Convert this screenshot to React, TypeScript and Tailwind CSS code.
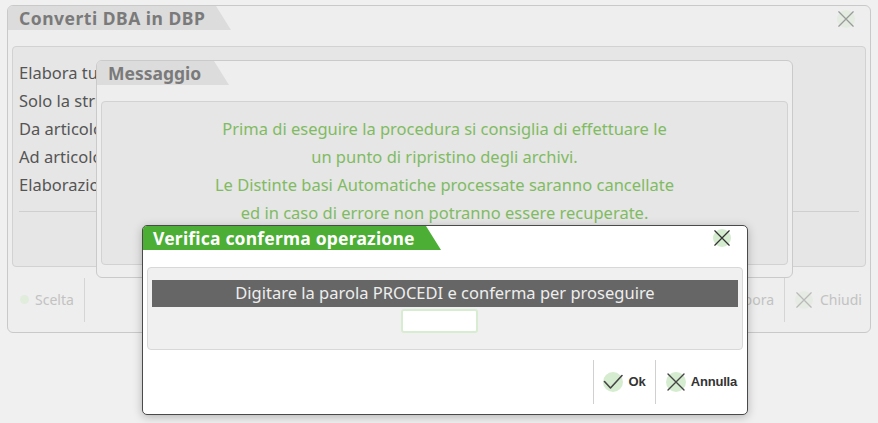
import React from "react";

const font = { fontFamily: '"Noto Sans", "Open Sans", sans-serif' };

function XIcon({ className, tint = "bg-[#dfeedd]" }: { className?: string; tint?: string }) {
  return (
    <span className={`relative inline-flex items-center justify-center rounded-full ${tint} ${className ?? ""}`}>
      <svg viewBox="0 0 20 20" className="absolute inset-0 h-full w-full" aria-hidden="true">
        <path d="M2 2 18 18M18 2 2 18" fill="none" stroke="currentColor" strokeWidth="1.4" strokeLinecap="round" />
      </svg>
    </span>
  );
}

function CheckIcon({ className }: { className?: string }) {
  return (
    <span className={`relative inline-flex items-center justify-center rounded-full bg-[#d6ecd0] ${className ?? ""}`}>
      <svg viewBox="0 0 20 20" className="absolute inset-0 h-full w-full" aria-hidden="true">
        <path d="M1.5 9.5 7.5 16 19 3.5" fill="none" stroke="currentColor" strokeWidth="1.6" strokeLinecap="round" strokeLinejoin="round" />
      </svg>
    </span>
  );
}

function Tab({ children, className }: { children: React.ReactNode; className: string }) {
  return (
    <div
      className={`flex items-center whitespace-nowrap font-bold [clip-path:polygon(0_0,calc(100%-15px)_0,100%_100%,0_100%)] ${className}`}
    >
      {children}
    </div>
  );
}

export default function App() {
  const labels = ["Elabora tutte", "Solo la struttura", "Da articolo", "Ad articolo", "Elaborazione"];
  const message = [
    "Prima di eseguire la procedura si consiglia di effettuare le",
    "un punto di ripristino degli archivi.",
    "Le Distinte basi Automatiche processate saranno cancellate",
    "ed in caso di errore non potranno essere recuperate.",
  ];

  return (
    <div className="relative h-[423px] w-[878px] overflow-hidden bg-[#f0f0f0]" style={font}>
      {/* main window */}
      <div className="absolute left-[7px] top-[5px] flex h-[328px] w-[864px] flex-col rounded-[6px] border border-[#c9c9c9] bg-[#eeeeee]">
        <div className="flex items-start justify-between">
          <Tab className="h-[24px] w-[223px] rounded-tl-[5px] bg-[#dcdcdc] pl-[11px] text-[17.5px] tracking-[0.5px] text-[#7a7a7a]">
            Converti DBA in DBP
          </Tab>
          <XIcon className="mr-[15px] mt-[4px] h-[18px] w-[18px] text-[#9a9a9a]" tint="bg-[#e4ece1]" />
        </div>
        <div className="mx-[4px] mt-[16px] flex h-[221px] flex-col rounded-[4px] border border-[#d2d2d2] bg-[#e6e6e6] px-[6px]">
          <div className="mt-[12px] flex flex-col">
            {labels.map((l) => (
              <div key={l} className="h-[28px] whitespace-nowrap text-[16.5px] leading-[28px] text-[#555]">
                {l}
              </div>
            ))}
          </div>
          <div className="mt-[12px] border-t border-[#cfcfcf]" />
        </div>
        <div className="flex flex-1 items-center pl-[12px] pr-[8px] text-[14px] text-[#c2c2c2]">
          <span className="mr-[6px] h-[9px] w-[9px] rounded-full bg-[#e1ecdd]" />
          <span>Scelta</span>
          <span className="ml-[10px] h-[44px] border-l border-[#d5d5d5]" />
          <span className="ml-auto">Elabora</span>
          <span className="mx-[10px] h-[44px] border-l border-[#d5d5d5]" />
          <XIcon className="h-[18px] w-[18px] text-[#b9b9b9]" tint="bg-[#e6ece3]" />
          <span className="ml-[7px]">Chiudi</span>
        </div>
      </div>

      {/* Messaggio dialog */}
      <div className="absolute left-[96px] top-[60px] flex h-[218px] w-[697px] flex-col rounded-[6px] border border-[#cacaca] bg-[#eeeeee]">
        <Tab className="h-[24px] w-[132px] rounded-tl-[5px] bg-[#dcdcdc] pl-[11px] text-[17.5px] text-[#7a7a7a]">
          Messaggio
        </Tab>
        <div className="mx-[4px] mt-[16px] flex flex-1 flex-col items-center rounded-[4px] border border-[#d2d2d2] bg-[#e6e6e6] pt-[13px]">
          {message.map((m) => (
            <div key={m} className="h-[28px] whitespace-nowrap text-[16.5px] leading-[28px] text-[#80bb62]">
              {m}
            </div>
          ))}
        </div>
        <div className="h-[12px]" />
      </div>

      {/* Verifica dialog */}
      <div className="absolute left-[142px] top-[225px] flex h-[190px] w-[606px] flex-col rounded-[5px] border border-[#4a4a4a] bg-white shadow-[0_2px_10px_rgba(0,0,0,0.25)]">
        <div className="flex items-start justify-between">
          <Tab className="h-[24px] w-[298px] rounded-tl-[4px] bg-[#4cae35] pl-[10px] text-[17.5px] tracking-[0.2px] text-white">
            Verifica conferma operazione
          </Tab>
          <XIcon className="mr-[16px] mt-[3px] h-[18px] w-[18px] text-[#333]" tint="bg-[#d6ecd0]" />
        </div>
        <div className="mx-[4px] mt-[17px] flex h-[83px] flex-col items-center rounded-[4px] border border-[#d8d8d8] bg-[#f0f0f0] px-[4px] pt-[12px]">
          <div className="flex h-[27px] w-full items-center justify-center bg-[#666666] text-[16.5px] text-[#eeeeee]">
            Digitare la parola PROCEDI e conferma per proseguire
          </div>
          <div className="mr-[11px] mt-[2px] h-[24px] w-[77px] rounded-[3px] border-2 border-[#d8ecd2] bg-white" />
        </div>
        <div
          className="flex flex-1 items-center justify-end pr-[10px] text-[13px] font-bold text-[#333]"
          style={{ fontFamily: '"Liberation Sans", Arial, sans-serif' }}
        >
          <span className="h-[44px] border-l border-[#d0d0d0]" />
          <CheckIcon className="ml-[9px] h-[20px] w-[20px] text-[#444]" />
          <span className="ml-[5px]">Ok</span>
          <span className="ml-[9px] h-[44px] border-l border-[#d0d0d0]" />
          <XIcon className="ml-[10px] h-[20px] w-[20px] text-[#444]" tint="bg-[#d6ecd0]" />
          <span className="ml-[5px] tracking-[-0.2px]">Annulla</span>
        </div>
      </div>
    </div>
  );
}
